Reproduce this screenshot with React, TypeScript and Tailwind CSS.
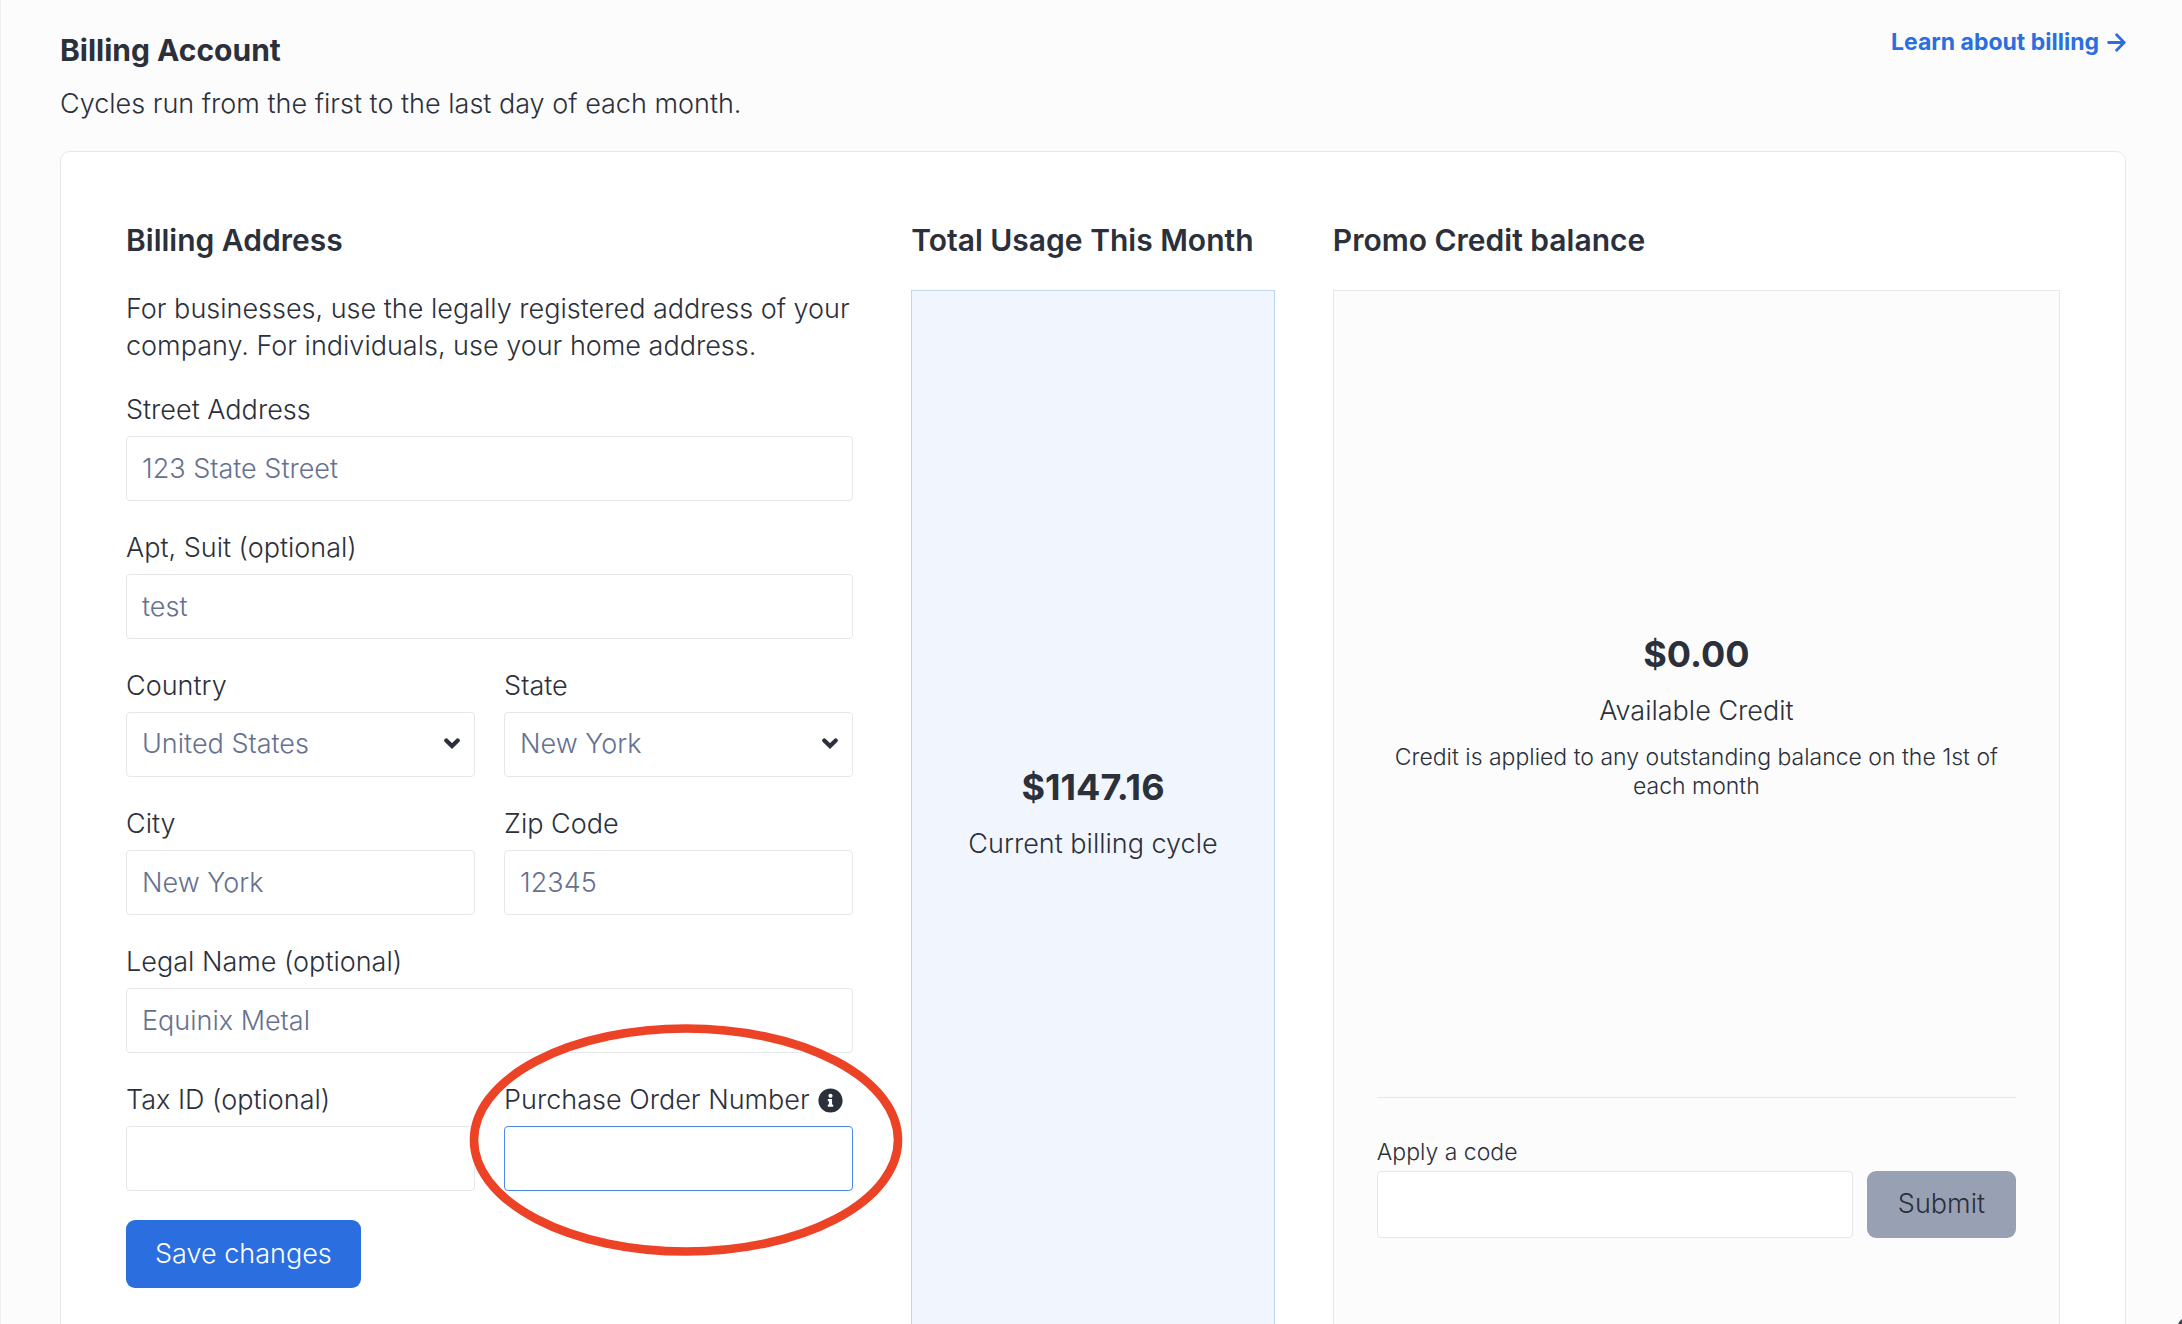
import type { ReactNode } from 'react';
import { FaInfoCircle } from 'react-icons/fa';

const inputClass =
  'block h-[65px] w-full rounded-sm border border-[#e6e7e9] bg-white px-[15px] text-[27px] text-[#65718f] outline-none';

type FieldProps = {
  id: string;
  label: string;
  children: ReactNode;
  icon?: ReactNode;
};

function Field({ id, label, children, icon }: FieldProps) {
  return (
    <div className="min-w-0">
      <div className="mb-2 flex h-9 items-center gap-2 whitespace-nowrap">
        <label htmlFor={id}>{label}</label>
        {icon}
      </div>
      {children}
    </div>
  );
}

type SelectProps = {
  id: string;
  options: string[];
};

function Select({ id, options }: SelectProps) {
  return (
    <div className="relative">
      <select id={id} defaultValue={options[0]} className={`${inputClass} appearance-none`}>
        {options.map((option) => (
          <option key={option}>{option}</option>
        ))}
      </select>
      <svg
        viewBox="0 0 16 11"
        className="pointer-events-none absolute top-[26px] right-[15px] h-[11px] w-4"
        fill="none"
        stroke="#2b303b"
        strokeWidth="4.2"
        strokeLinecap="round"
        strokeLinejoin="miter"
      >
        <path d="M2.3 2.4 8 8l5.7-5.6" />
      </svg>
    </div>
  );
}

function AddressForm() {
  return (
    <form onSubmit={(e) => e.preventDefault()} className="pb-12">
      <p className="mb-7 leading-[37px]">
        For businesses, use the legally registered address of your company. For individuals, use your home address.
      </p>
      <div className="flex flex-col gap-[29px]">
        <Field id="street" label="Street Address">
          <input id="street" type="text" defaultValue="123 State Street" className={inputClass} />
        </Field>
        <Field id="apt" label="Apt, Suit (optional)">
          <input id="apt" type="text" defaultValue="test" className={inputClass} />
        </Field>
        <div className="grid grid-cols-2 gap-[29px]">
          <Field id="country" label="Country">
            <Select id="country" options={['United States', 'Canada']} />
          </Field>
          <Field id="state" label="State">
            <Select id="state" options={['New York', 'New Jersey']} />
          </Field>
          <Field id="city" label="City">
            <input id="city" type="text" defaultValue="New York" className={inputClass} />
          </Field>
          <Field id="zip" label="Zip Code">
            <input id="zip" type="text" defaultValue="12345" className={inputClass} />
          </Field>
        </div>
        <Field id="legal" label="Legal Name (optional)">
          <input id="legal" type="text" defaultValue="Equinix Metal" className={inputClass} />
        </Field>
        <div className="grid grid-cols-2 gap-[29px]">
          <Field id="tax" label="Tax ID (optional)">
            <input id="tax" type="text" className={inputClass} />
          </Field>
          <div className="relative min-w-0">
            <Field
              id="po"
              label="Purchase Order Number"
              icon={<FaInfoCircle className="size-[25px] shrink-0" />}
            >
              <input
                id="po"
                type="text"
                className="block h-[65px] w-full rounded-sm border border-[#4a8ae8] bg-white px-[15px] text-[27px] text-[#65718f] outline-none"
              />
            </Field>
            {/* callout around the purchase order field */}
            <svg
              viewBox="0 0 434 232"
              className="pointer-events-none absolute -top-[58px] -left-[35px] h-[232px] w-[434px]"
              fill="none"
              stroke="#ec4226"
              strokeWidth="8.6"
            >
              <ellipse cx="217" cy="116" rx="212" ry="111.5" />
            </svg>
          </div>
        </div>
      </div>
      <button type="submit" className="mt-[29px] h-[68px] rounded-[9px] bg-[#2a6ee0] px-[29px] text-white">
        Save changes
      </button>
    </form>
  );
}

function PromoCredit() {
  return (
    <div className="flex grow flex-col border border-[#e6e7e9] bg-[#fcfcfc] px-[43px] pt-11 pb-[97px]">
      <div className="flex grow flex-col items-center justify-center text-center">
        <p className="text-4xl leading-[44px] font-bold">$0.00</p>
        <p className="mt-4 leading-[37px]">Available Credit</p>
        <p className="mt-[14px] text-[23px] leading-[29px]">
          Credit is applied to any outstanding balance on the 1st of each month
        </p>
      </div>
      <form onSubmit={(e) => e.preventDefault()} className="border-t border-[#e6e7e9] pt-10">
        <label htmlFor="code" className="mb-1 block text-[23px] leading-[29px]">
          Apply a code
        </label>
        <div className="flex gap-[14px]">
          <input
            id="code"
            type="text"
            className="h-[67px] min-w-0 grow rounded-sm border border-[#e6e7e9] bg-white px-[15px] outline-none"
          />
          <button type="submit" className="h-[67px] rounded-[9px] bg-[#98a0b3] px-[31px]">
            Submit
          </button>
        </div>
      </form>
    </div>
  );
}

export default function App() {
  return (
    <div className="relative h-screen overflow-hidden border-l border-[#f0f0f1] bg-[#fcfcfc] pt-7 pr-14 pl-[59px] font-['Inter',sans-serif] text-[27px] font-light text-[#2b303b]">
      <header className="flex items-start justify-between">
        <div>
          <h1 className="text-[30px] leading-[44px] font-bold">Billing Account</h1>
          <p className="mt-[13px] leading-[37px]">Cycles run from the first to the last day of each month.</p>
        </div>
        <a href="#billing-docs" className="flex items-center gap-2 text-[23px] leading-7 font-bold text-[#2a6ee0]">
          Learn about billing
          <svg
            viewBox="0 0 19 19"
            className="size-[19px]"
            fill="none"
            stroke="currentColor"
            strokeWidth="2.8"
            strokeLinecap="round"
            strokeLinejoin="round"
          >
            <path d="M1.6 9.5h15.4M9.6 1.8l7.6 7.7-7.6 7.7" />
          </svg>
        </a>
      </header>

      <main className="mt-[29px] grid grid-cols-[2fr_1fr_2fr] gap-[58px] rounded-[10px] border border-[#e6e7e9] bg-white p-[65px]">
        <section className="min-w-0">
          <h2 className="mb-[27px] text-[30px] leading-[46px] font-semibold">Billing Address</h2>
          <AddressForm />
        </section>
        <section className="flex min-w-0 flex-col">
          <h2 className="mb-[27px] text-[30px] leading-[46px] font-semibold whitespace-nowrap">
            Total Usage This Month
          </h2>
          <div className="flex grow flex-col items-center justify-center border border-[#bcd5f3] bg-[#f1f6fe] text-center">
            <p className="text-4xl leading-[44px] font-bold">$1147.16</p>
            <p className="mt-4 leading-[37px]">Current billing cycle</p>
          </div>
        </section>
        <section className="flex min-w-0 flex-col">
          <h2 className="mb-[27px] text-[30px] leading-[46px] font-semibold">Promo Credit balance</h2>
          <PromoCredit />
        </section>
      </main>

      <svg viewBox="0 0 4 5" className="absolute right-0 bottom-0 h-[5px] w-1" fill="#3d4656">
        <path d="M4 0v5H0Q1 2 4 0Z" />
      </svg>
    </div>
  );
}
